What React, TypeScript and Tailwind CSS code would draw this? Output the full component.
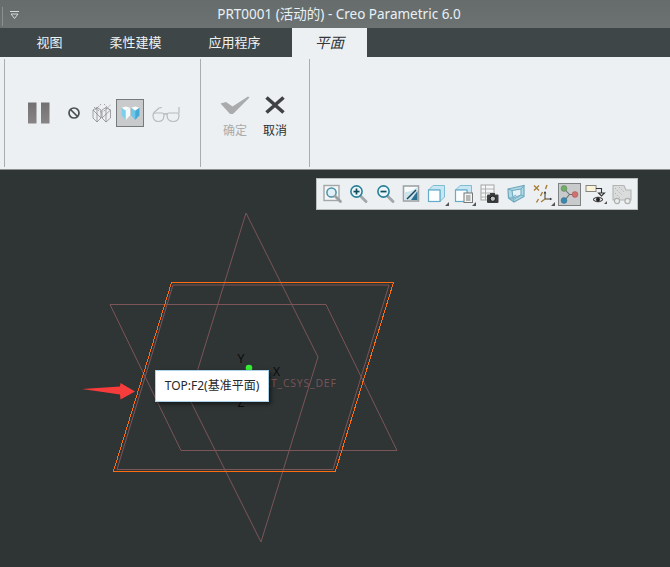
import React from "react";

const UI_FONT = "font-['Noto_Sans','Noto_Sans_CJK_SC',sans-serif]";

const Caret = () => <path d="M24 24h-4l4-4z" fill="#555" />;

const Magnifier = ({ sign }: { sign?: "+" | "-" }) => (
  <>
    <line x1="14.5" y1="14" x2="20" y2="19.500" stroke="#a3a9ab" strokeWidth="3" strokeLinecap="round" />
    <circle cx="10.500" cy="9.500" r="5.600" fill="#eaf6fb" stroke="#2a8098" strokeWidth="1.600" />
    {sign && <rect x="7.500" y="8.700" width="6" height="1.700" fill="#134a5c" />}
    {sign === "+" && <rect x="9.650" y="6.500" width="1.700" height="6" fill="#134a5c" />}
  </>
);

const RefitIcon = () => (
  <svg width="24" height="24" viewBox="0 0 24 24">
    <rect x="4" y="3.500" width="15" height="15" fill="#f4f7f8" stroke="#a3a7a8" strokeWidth="1.400" />
    <circle cx="11.500" cy="10.500" r="4.600" fill="#dff0f7" stroke="#4b90a8" strokeWidth="1.500" />
    <line x1="15" y1="14" x2="20.500" y2="19.500" stroke="#9aa0a2" strokeWidth="2.800" strokeLinecap="round" />
  </svg>
);

const ZoomIcon = ({ sign }: { sign: "+" | "-" }) => (
  <svg width="24" height="24" viewBox="0 0 24 24">
    <Magnifier sign={sign} />
  </svg>
);

const ShadeIcon = () => (
  <svg width="24" height="24" viewBox="0 0 24 24">
    <rect x="4.500" y="4" width="15" height="15" fill="#f7fbfc" stroke="#9ea3a4" strokeWidth="1.600" />
    <path d="M5.500 18V10C11 10 15 8 18.500 5V18z" fill="#cfe3ea" />
    <path d="M5.500 18L12 18L18.500 9V18z" fill="#2b6f92" />
    <path d="M8 17L17 8" stroke="#14465f" strokeWidth="1.400" />
  </svg>
);

const CubeIcon = ({ doc }: { doc?: boolean }) => (
  <svg width="24" height="24" viewBox="0 0 24 24">
    <path d="M3.500 8L8 3.500H19.500V15L15 19.500V8z" fill="#c5e6f2" stroke="#7fbdd3" strokeWidth="1" />
    <rect x="3.500" y="8" width="11.500" height="11.500" fill="#fbfdfe" stroke="#64acc8" strokeWidth="1.200" />
    {doc && (
      <>
        <rect x="12" y="11" width="8.500" height="9.500" fill="#f3f5f5" stroke="#777" strokeWidth="1" />
        <path d="M14 14h4.500M14 16h4.500M14 18h4.500" stroke="#777" strokeWidth="1" />
      </>
    )}
    <Caret />
  </svg>
);

const CameraTableIcon = () => (
  <svg width="24" height="24" viewBox="0 0 24 24">
    <rect x="3" y="3" width="13" height="15" fill="#f6f7f7" stroke="#a3a5a5" strokeWidth="1" />
    <path d="M3 7h13M3 11h13M3 15h13M7.500 3v15" stroke="#b0b2b2" strokeWidth="1" />
    <rect x="9" y="12.500" width="11.500" height="8.500" rx="1" fill="#3a3c3e" />
    <rect x="12" y="11" width="5" height="2.500" fill="#3a3c3e" />
    <circle cx="14.800" cy="16.700" r="2.700" fill="#b9bdbf" stroke="#111" strokeWidth="1" />
  </svg>
);

const PerspectiveIcon = () => (
  <svg width="24" height="24" viewBox="0 0 24 24">
    <path d="M4 7L20 3.500V14.500L10 20L4.500 16z" fill="#b4d9e6" stroke="#6ba7bd" strokeWidth="1.200" />
    <path d="M8 8.500L17 7V13L9 16z" fill="#e4f2f7" stroke="#6ba7bd" strokeWidth="1" />
    <path d="M4.500 16L9 16M10 20L9 16M20 14.500L17 13M4 7L8 8.500M20 3.500L17 7" stroke="#6ba7bd" strokeWidth="1" />
    <path d="M8 18.500L17 13.500M7 16L12 13" stroke="#82bacd" strokeWidth="1.200" />
  </svg>
);

const CsysIcon = () => (
  <svg width="24" height="24" viewBox="0 0 24 24">
    <path d="M3 3.500l5 5M8 3.500l-5 5" stroke="#a77c35" strokeWidth="1.300" />
    <path d="M16 3l-1.500 4M11.500 10l-2 4M7.500 17l-2 3.500" stroke="#a77c35" strokeWidth="1.400" />
    <path d="M14 10v7h5.500" stroke="#3a3a3a" strokeWidth="1" fill="none" />
    <path d="M14 17l-4 3" stroke="#a77c35" strokeWidth="1.300" />
    <path d="M12.700 11.500L14 9l1.300 2.500zM19 15.700l2.300 1.300-2.300 1.300z" fill="#3a3a3a" />
    <Caret />
  </svg>
);

const DatumDisplayIcon = () => (
  <svg width="21" height="21" viewBox="0 0 21 21">
    <path d="M5 4.500L10.500 10.500L16 10.500M5 17L10.500 10.500" stroke="#6b6f70" strokeWidth="1.100" fill="none" />
    <circle cx="5" cy="4.500" r="2.900" fill="#6fae66" stroke="#587f55" strokeWidth=".5" />
    <circle cx="16" cy="10.500" r="2.900" fill="#d2716f" stroke="#97524f" strokeWidth=".5" />
    <circle cx="5" cy="16.500" r="2.900" fill="#3b88ad" stroke="#2d6a87" strokeWidth=".5" />
  </svg>
);

const AnnotationEyeIcon = () => (
  <svg width="26" height="24" viewBox="0 0 26 24">
    <rect x="4" y="3.500" width="10" height="6" fill="#fbf3d9" stroke="#85857f" strokeWidth="1" />
    <path d="M14 6.500h5.500V11M16.500 11h6l-3 3z" fill="none" stroke="#333" strokeWidth="1.100" />
    <path d="M11 17.500C13.500 14.500 18.500 14.500 21 17.500C18.500 20.500 13.500 20.500 11 17.500z" fill="#dcdcdc" stroke="#222" strokeWidth="1" />
    <circle cx="16" cy="17.500" r="2" fill="#222" />
    <path d="M25 22h-3l3-3z" fill="#555" />
  </svg>
);

const AssemblyIcon = () => (
  <svg width="24" height="24" viewBox="0 0 24 24">
    <path d="M3 3.500L14 3.500L16 8H21V18H3z" fill="#dadcdc" stroke="#b3b5b5" strokeWidth="1.100" />
    <path d="M5 6l7 7M9 5l5 5M5 11l5 5" stroke="#b3b5b5" strokeWidth="1" strokeDasharray="1.500 1.500" />
    <circle cx="7" cy="19" r="2.600" fill="#eceeee" stroke="#adafaf" strokeWidth="1.200" />
    <circle cx="17.500" cy="19" r="2.600" fill="#eceeee" stroke="#adafaf" strokeWidth="1.200" />
  </svg>
);

const PauseIcon = () => (
  <svg width="24" height="22" viewBox="0 0 24 22">
    <defs>
      <linearGradient id="pauseBar" x1="0" y1="0" x2="0" y2="1">
        <stop offset="0" stopColor="#727071" />
        <stop offset="1" stopColor="#878586" />
      </linearGradient>
    </defs>
    <rect x="1" y="0.500" width="8.500" height="21" fill="url(#pauseBar)" />
    <rect x="14" y="0.500" width="8.500" height="21" fill="url(#pauseBar)" />
  </svg>
);

const BanIcon = () => (
  <svg width="14" height="14" viewBox="0 0 14 14">
    <circle cx="7" cy="7" r="5" fill="none" stroke="#4c4e50" strokeWidth="1.700" />
    <line x1="3.500" y1="3.500" x2="10.500" y2="10.500" stroke="#4c4e50" strokeWidth="1.700" />
  </svg>
);

const WireBoxesIcon = () => (
  <svg width="20" height="22" viewBox="0 0 20 22" fill="none" stroke="#7e8082" strokeWidth=".7">
    <path d="M1 8L5 5.500L9 8V16L5 20L1 16zM5 5.500V20M1 8L9 16" />
    <path d="M10 8L14 5.500L18.500 8V16L14 20L10 16zM14 5.500V20M18.500 8L10 16" />
    <path d="M2 5l8 6M9 2l-6 6M12 2l6 6M18.500 3L11 10" strokeDasharray="1.500 1" />
  </svg>
);

const ShadedBoxesIcon = () => (
  <svg width="19" height="16" viewBox="0 0 20 17">
    <path d="M0.500 3L5 1.500L9.500 3L5 6z" fill="#fbfcfc" />
    <path d="M0.500 3L5 6V16L0.500 11z" fill="#7cd0ee" />
    <path d="M5 6L9.500 3V11L5 16z" fill="#f4fbfd" />
    <path d="M10.500 3L15 1.500L19.500 3L15 6z" fill="#fbfcfc" />
    <path d="M10.500 3L15 6V16L10.500 11z" fill="#6cc6ea" />
    <path d="M15 6L19.500 3V11L15 16z" fill="#43a9d5" />
  </svg>
);

const GlassesIcon = () => (
  <svg width="28" height="17" viewBox="0 0 28 17" fill="none" stroke="#b8babb" strokeWidth="1.200">
    <path d="M1 9C1 7.500 2 7 4 7H10C11.500 7 12 7.500 12 9C12 13 10 15.500 6.500 15.500C3 15.500 1 13 1 9z" />
    <path d="M15 9C15 7.500 15.500 7 17 7H25C26.500 7 27 7.500 27 9C27 13 25 15.500 21.500 15.500C17.500 15.500 15 13 15 9z" />
    <path d="M12 8.500C13 7.500 14 7.500 15 8.500M1.500 7L7 2L10 1.500M27 7V1" />
  </svg>
);

const CheckIcon = () => (
  <svg width="30" height="18" viewBox="0 0 30 18">
    <path d="M0.500 7.500L6 6L12.500 10.500L28 0.500L29.500 1.500L13 18H10z" fill="#a9abac" />
  </svg>
);

const CrossIcon = () => (
  <svg width="20" height="18" viewBox="0 0 20 18">
    <path d="M1.500 1.500L18.500 16.500M18.500 1.500L1.500 16.500" stroke="#3f4142" strokeWidth="3.600" />
  </svg>
);

const tabs = ["视图", "柔性建模", "应用程序"];

const App = () => {
  return (
    <div className={`flex h-[567px] w-[670px] flex-col overflow-hidden bg-[#2f3435] ${UI_FONT}`}>
      {/* title bar */}
      <div className="relative flex h-[28px] items-center justify-center bg-gradient-to-b from-[#666c6c] to-[#6c7272] text-[13.5px] text-[#e8f1f6]">
        <div className="absolute left-[2px] top-[7px] h-[19px] w-px bg-[#8a9090]" />
        <svg className="absolute left-[10px] top-[11px]" width="9" height="8" viewBox="0 0 9 8">
          <path d="M0 0.500H9" stroke="#d5dadb" />
          <path d="M1 3H8L4.500 7.500z" fill="none" stroke="#d5dadb" />
        </svg>
        <span className="ml-[8px]">PRT0001 (活动的) - Creo Parametric 6.0</span>
      </div>

      {/* tabs */}
      <div className="flex h-[29px] items-center bg-[#3e4647] pl-[13px] text-[13px] text-[#eef2f3]">
        {tabs.map((t) => (
          <div key={t} className="px-[23.5px] whitespace-nowrap">
            {t}
          </div>
        ))}
        <div className="ml-[8px] flex h-full w-[75px] items-center justify-center bg-[#edf0f2] text-[14.5px] italic text-[#30363a]">
          平面
        </div>
      </div>

      {/* ribbon */}
      <div className="flex h-[113px] border-b border-[#8c9090] bg-[#edf0f2] pb-[2px] pl-[4px] pt-[2px]">
        <div className="flex w-[196px] items-center border-l border-[#a9adae] pb-[2px] pl-[22px] pt-[2px]">
          <PauseIcon />
          <div className="ml-[16px]">
            <BanIcon />
          </div>
          <div className="ml-[11px]">
            <WireBoxesIcon />
          </div>
          <div className="ml-[4px] flex h-[28px] w-[28px] items-center justify-center border border-[#777a7b] bg-[#c9cacb]">
            <ShadedBoxesIcon />
          </div>
          <div className="ml-[8px] mt-[3px]">
            <GlassesIcon />
          </div>
        </div>
        <div className="flex w-[109px] items-center border-l border-[#a9adae] pl-[14px]">
          <div className="flex w-[40px] flex-col items-center gap-[8px] pt-[10px] text-[12px] text-[#a9abac]">
            <CheckIcon />
            <span>确定</span>
          </div>
          <div className="flex w-[40px] flex-col items-center gap-[8px] pt-[10px] text-[12px] text-[#2c2e30]">
            <CrossIcon />
            <span>取消</span>
          </div>
        </div>
        <div className="border-l border-[#a9adae]" />
      </div>

      {/* graphics window */}
      <div className="relative flex-1">
        <svg className="block h-full w-full" viewBox="0 170 670 397">
          <g fill="none" stroke="#7b5558" strokeWidth="1">
            <path d="M110 304.500H326L397 450.500H181z" />
            <path d="M246 213L318 357L261 542L189 398z" />
            <path d="M173 285H389L333 469.500H117z" />
          </g>
          <path d="M171.500 282.500H393.500L335.500 471H113.500z" fill="none" stroke="#ff6c10" strokeWidth="1" shapeRendering="crispEdges" />
          <circle cx="249" cy="368" r="3.300" fill="#35ee35" />
          <text x="237.500" y="363" fontSize="12" fill="#0b0b0b">Y</text>
          <text x="273" y="376" fontSize="12" fill="#0b0b0b">X</text>
          <text x="237.500" y="407" fontSize="12" fill="#0b0b0b">Z</text>
          <text x="256.500" y="387" fontSize="10.500" letterSpacing=".75" fill="#755356">PRT_CSYS_DEF</text>
          <path d="M82 389L120 386.500L120.500 383L135 391.500L120.500 399.500L120 394.500z" fill="#f73c3c" />
        </svg>

        {/* view toolbar */}
        <div className="absolute left-[316px] top-[8px] grid h-[32px] w-[322px] grid-cols-12 items-center justify-items-center border border-[#b9bdbd] bg-[#edf0f2] px-[2px]">
          <RefitIcon />
          <ZoomIcon sign="+" />
          <ZoomIcon sign="-" />
          <ShadeIcon />
          <CubeIcon />
          <CubeIcon doc />
          <CameraTableIcon />
          <PerspectiveIcon />
          <CsysIcon />
          <div className="flex h-[23px] w-[23px] items-center justify-center border border-[#7f8283] bg-[#c9cacb]">
            <DatumDisplayIcon />
          </div>
          <AnnotationEyeIcon />
          <AssemblyIcon />
        </div>

        {/* tooltip */}
        <div className="absolute left-[155px] top-[200px] flex h-[32px] w-[114px] items-center justify-center border border-[#a9d1e8] bg-white text-[12px] text-[#26282b] shadow-[2px_2px_4px_rgba(0,0,0,0.55)]">
          TOP:F2(基准平面)
        </div>
      </div>
    </div>
  );
};

export default App;
